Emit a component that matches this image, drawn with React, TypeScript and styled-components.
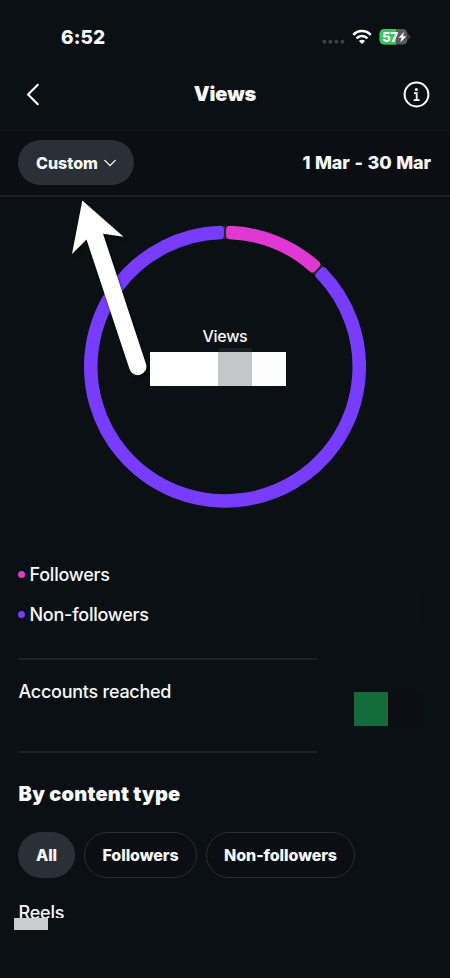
import React from "react";
import styled, { createGlobalStyle } from "styled-components";

const GlobalStyle = createGlobalStyle`
  * { box-sizing: border-box; }
  body { margin: 0; background: #0b1014; }
`;

const Screen = styled.main`
  position: relative;
  width: 450px;
  height: 978px;
  overflow: hidden;
  display: flex;
  flex-direction: column;
  background: #0b1014;
  color: #f8f9fa;
  font-family: Inter, "Liberation Sans", sans-serif;
`;

const StatusBar = styled.div`
  height: 60px;
  padding: 14px 39px 0 61px;
  display: flex;
  align-items: center;
  justify-content: space-between;
  flex: none;
`;

const Clock = styled.span`
  padding-top: 1px;
  font-size: 19px;
  line-height: 24px;
  font-weight: 800;
  letter-spacing: 0.1px;
`;

const StatusIcons = styled.div`
  display: flex;
  align-items: center;
`;

const Header = styled.header`
  height: 71px;
  padding: 0 20px 2px 25px;
  display: grid;
  grid-template-columns: 40px 1fr 45px;
  align-items: center;
  border-bottom: 1px solid #171b20;
  flex: none;
  svg { display: block; }
`;

const Title = styled.h1`
  margin: 0;
  text-align: center;
  font-size: 20px;
  line-height: 24px;
  font-weight: 900;
  letter-spacing: -0.15px;
`;

const InfoSlot = styled.div`
  display: flex;
  justify-content: flex-end;
`;

const FilterBar = styled.div`
  height: 66px;
  padding: 0 19px 1px 18px;
  display: flex;
  align-items: center;
  justify-content: space-between;
  border-bottom: 2px solid #1c2025;
  background: #0b0f14;
  flex: none;
`;

const PeriodButton = styled.button`
  width: 116px;
  height: 45px;
  padding: 0 18px;
  display: flex;
  align-items: center;
  justify-content: space-between;
  border: 0;
  border-radius: 23px;
  background: #2b3036;
  color: inherit;
  font: 800 16px/20px Inter, sans-serif;
`;

const DateRange = styled.span`
  padding-top: 1px;
  font-size: 18px;
  line-height: 22px;
  font-weight: 850;
  letter-spacing: -0.1px;
  word-spacing: 0.8px;
`;

const ChartArea = styled.section`
  height: 354px;
  padding-top: 28px;
  display: grid;
  justify-items: center;
  align-items: start;
  flex: none;
  > * { grid-area: 1 / 1; }
`;

const ChartLabel = styled.div`
  padding-top: 101px;
  font-size: 16px;
  line-height: 20px;
  font-weight: 500;
  letter-spacing: -0.3px;
`;

const MaskedValue = styled.div`
  position: absolute;
  left: 150px;
  top: 348px;
  display: flex;
  align-items: flex-end;
`;

const MaskBlock = styled.span<{ $w: number; $h: number; $c: string }>`
  width: ${(p) => p.$w}px;
  height: ${(p) => p.$h}px;
  background: ${(p) => p.$c};
`;

const Pointer = styled.svg`
  position: absolute;
  left: 60px;
  top: 190px;
  filter: drop-shadow(1px 2px 1.5px rgba(0, 0, 0, 0.6));
`;

const Legend = styled.ul`
  list-style: none;
  margin: 0;
  padding: 11px 0 0 18px;
  height: 107px;
  flex: none;
`;

const LegendItem = styled.li<{ $color: string }>`
  height: 24px;
  margin-bottom: 16px;
  display: flex;
  align-items: center;
  gap: 4.5px;
  font-size: 18px;
  font-weight: 500;
  letter-spacing: -0.24px;
  &::before {
    content: "";
    width: 7px;
    height: 7px;
    border-radius: 50%;
    background: ${(p) => p.$color};
  }
`;

const Reached = styled.section`
  width: 299px;
  height: 95px;
  margin-left: 18px;
  padding: 20px 0 0 0.5px;
  border-top: 2px solid #1c2025;
  border-bottom: 2px solid #1c2025;
  font-size: 18px;
  line-height: 24px;
  font-weight: 500;
  letter-spacing: -0.26px;
  flex: none;
`;

const Patch = styled.div<{ $x: number; $y: number; $h: number; $c: string }>`
  position: absolute;
  left: ${(p) => p.$x}px;
  top: ${(p) => p.$y}px;
  width: 34px;
  height: ${(p) => p.$h}px;
  background: ${(p) => p.$c};
`;

const Section = styled.section`
  padding: 29px 18px 0;
`;

const SectionTitle = styled.h2`
  margin: 0 0 26px;
  padding-left: 0.6px;
  font-size: 20px;
  line-height: 24px;
  font-weight: 900;
  letter-spacing: 0.2px;
`;

const Chips = styled.div`
  display: flex;
  gap: 9px;
`;

const Chip = styled.button<{ $w: number; $active?: boolean }>`
  width: ${(p) => p.$w}px;
  height: 46px;
  padding: 0;
  border-radius: 23px;
  border: 1px solid ${(p) => (p.$active ? "#2b3036" : "#2a2d32")};
  background: ${(p) => (p.$active ? "#2b3036" : "#0b0e13")};
  color: inherit;
  font: 800 16px/20px Inter, sans-serif;
  letter-spacing: -0.08px;
`;

const RowLabel = styled.div`
  margin-top: 23px;
  padding-left: 0.5px;
  font-size: 18px;
  line-height: 24px;
  font-weight: 500;
  letter-spacing: -0.2px;
`;

const CX = 141;
const CY = 141.7;

function point(radius: number, angle: number) {
  return `${(CX + radius * Math.sin(angle)).toFixed(2)} ${(CY - radius * Math.cos(angle)).toFixed(2)}`;
}

/* Annular sector whose corners are rounded by an outline of the same colour. */
function sector(fromDeg: number, toDeg: number) {
  const outer = 137.2;
  const inner = 131.3;
  const inset = 4.9;
  const a = (fromDeg * Math.PI) / 180;
  const b = (toDeg * Math.PI) / 180;
  const large = toDeg - fromDeg > 180 ? 1 : 0;
  return [
    `M${point(outer, a + inset / outer)}`,
    `A${outer} ${outer} 0 ${large} 1 ${point(outer, b - inset / outer)}`,
    `L${point(inner, b - inset / inner)}`,
    `A${inner} ${inner} 0 ${large} 0 ${point(inner, a + inset / inner)}Z`,
  ].join(" ");
}

const segments = [
  { from: 0, to: 43.8, color: "#df38d3" },
  { from: 43.8, to: 360, color: "#783cff" },
];

function Donut() {
  return (
    <svg width="282" height="283" viewBox="0 0 282 283">
      <circle cx={CX} cy={CY} r="134.2" fill="none" stroke="#25292e" strokeWidth="12.8" />
      {segments.map((s) => (
        <path key={s.color} d={sector(s.from, s.to)} fill={s.color} stroke={s.color} strokeWidth="7.6" strokeLinejoin="round" />
      ))}
    </svg>
  );
}

function Signal() {
  return (
    <svg width="23" height="16" viewBox="0 0 23 16" fill="#3d4145">
      {[2, 8, 14, 20].map((x) => (
        <circle key={x} cx={x + 0.4} cy="12.7" r="2" />
      ))}
    </svg>
  );
}

function Wifi() {
  return (
    <svg width="20" height="16" viewBox="0 0 20 16" fill="none" stroke="#fff" strokeWidth="2.5">
      <path d="M1.3 5.9C6.2.8 13.8.8 18.7 5.9" />
      <path d="M4.5 9.3c3.2-3.1 7.8-3.1 11 0" />
      <path d="M10 15 6.9 11.9c1.8-1.6 4.4-1.6 6.2 0Z" fill="#fff" stroke="none" />
    </svg>
  );
}

function Battery() {
  return (
    <svg width="32" height="18" viewBox="0 0 32 18">
      <defs>
        <clipPath id="battery-body">
          <rect x="0.5" y="1" width="28" height="15.6" rx="4.8" />
        </clipPath>
      </defs>
      <g clipPath="url(#battery-body)">
        <rect width="29" height="18" fill="#56595e" />
        <rect width="17" height="18" fill="#34c759" />
      </g>
      <path d="M29.5 6.2c1.7.6 1.7 4.6 0 5.2Z" fill="#56595e" />
      <text x="3.2" y="13.6" fill="#fff" fontFamily="Inter" fontSize="13" fontWeight="800" textLength="16" lengthAdjust="spacingAndGlyphs">57</text>
      <path d="M25.2 3.8 19.6 9.8h3L21.3 14.4 27.3 8.2h-3.3Z" fill="#fff" />
    </svg>
  );
}

const Spacer = styled.span<{ $w: number }>`
  width: ${(p) => p.$w}px;
`;

export default function App() {
  return (
    <>
      <GlobalStyle />
      <Screen>
        <StatusBar>
          <Clock>6:52</Clock>
          <StatusIcons>
            <Signal />
            <Spacer $w={7} />
            <Wifi />
            <Spacer $w={7} />
            <Battery />
          </StatusIcons>
        </StatusBar>
        <Header>
          <svg width="16" height="24" viewBox="0 0 16 24" fill="none" stroke="#fff" strokeWidth="2.1" strokeLinecap="round" strokeLinejoin="miter">
            <path d="M12.8 2.8 3.1 12.5 12.8 22.2" />
          </svg>
          <Title>Views</Title>
          <InfoSlot>
            <svg width="27" height="27" viewBox="0 0 27 27" fill="none" stroke="#fff" strokeWidth="2">
              <circle cx="13.5" cy="13.5" r="11.9" />
              <path d="M11 12.2h2.7v6.8M10.7 19.2h5.8" strokeWidth="1.8" />
              <circle cx="13.3" cy="8.4" r="1.5" fill="#fff" stroke="none" />
            </svg>
          </InfoSlot>
        </Header>
        <FilterBar>
          <PeriodButton>
            Custom
            <svg width="12" height="8" viewBox="0 0 12 8" fill="none" stroke="#fff" strokeWidth="1.3" strokeLinecap="round">
              <path d="M.8 1.4 6 6.6l5.2-5.2" />
            </svg>
          </PeriodButton>
          <DateRange>1 Mar - 30 Mar</DateRange>
        </FilterBar>
        <ChartArea>
          <Donut />
          <ChartLabel>Views</ChartLabel>
        </ChartArea>
        <Legend>
          <LegendItem $color="#df38d3">Followers</LegendItem>
          <LegendItem $color="#783cff">Non-followers</LegendItem>
        </Legend>
        <Reached>Accounts reached</Reached>
        <Section>
          <SectionTitle>By content type</SectionTitle>
          <Chips>
            <Chip $w={57} $active>All</Chip>
            <Chip $w={113}>Followers</Chip>
            <Chip $w={149}>Non-followers</Chip>
          </Chips>
          <RowLabel>Reels</RowLabel>
        </Section>

        <MaskedValue>
          <MaskBlock $w={68} $h={34} $c="#fff" />
          <MaskBlock $w={34} $h={38} $c="linear-gradient(#1b1f23 4px, #c5c6c8 4px)" />
          <MaskBlock $w={34} $h={34} $c="#fdfdfd" />
        </MaskedValue>
        <Patch $x={388} $y={590} $h={34} $c="#0c1115" />
        <Patch $x={354} $y={692} $h={34} $c="#156c3b" />
        <Patch $x={388} $y={692} $h={34} $c="#0b0e12" />
        <Patch $x={14} $y={918} $h={12} $c="#cbccce" />
        <Patch $x={48} $y={918} $h={12} $c="#0b1014" />
        <Pointer width="100" height="200" viewBox="0 0 100 200" fill="#fff">
          <path d="M22.3 10.5 63.5 46.7 43 43.7 86 174A8.6 8.6 0 0 1 69.5 179L26.5 49.5 12 64Z" />
        </Pointer>
      </Screen>
    </>
  );
}
